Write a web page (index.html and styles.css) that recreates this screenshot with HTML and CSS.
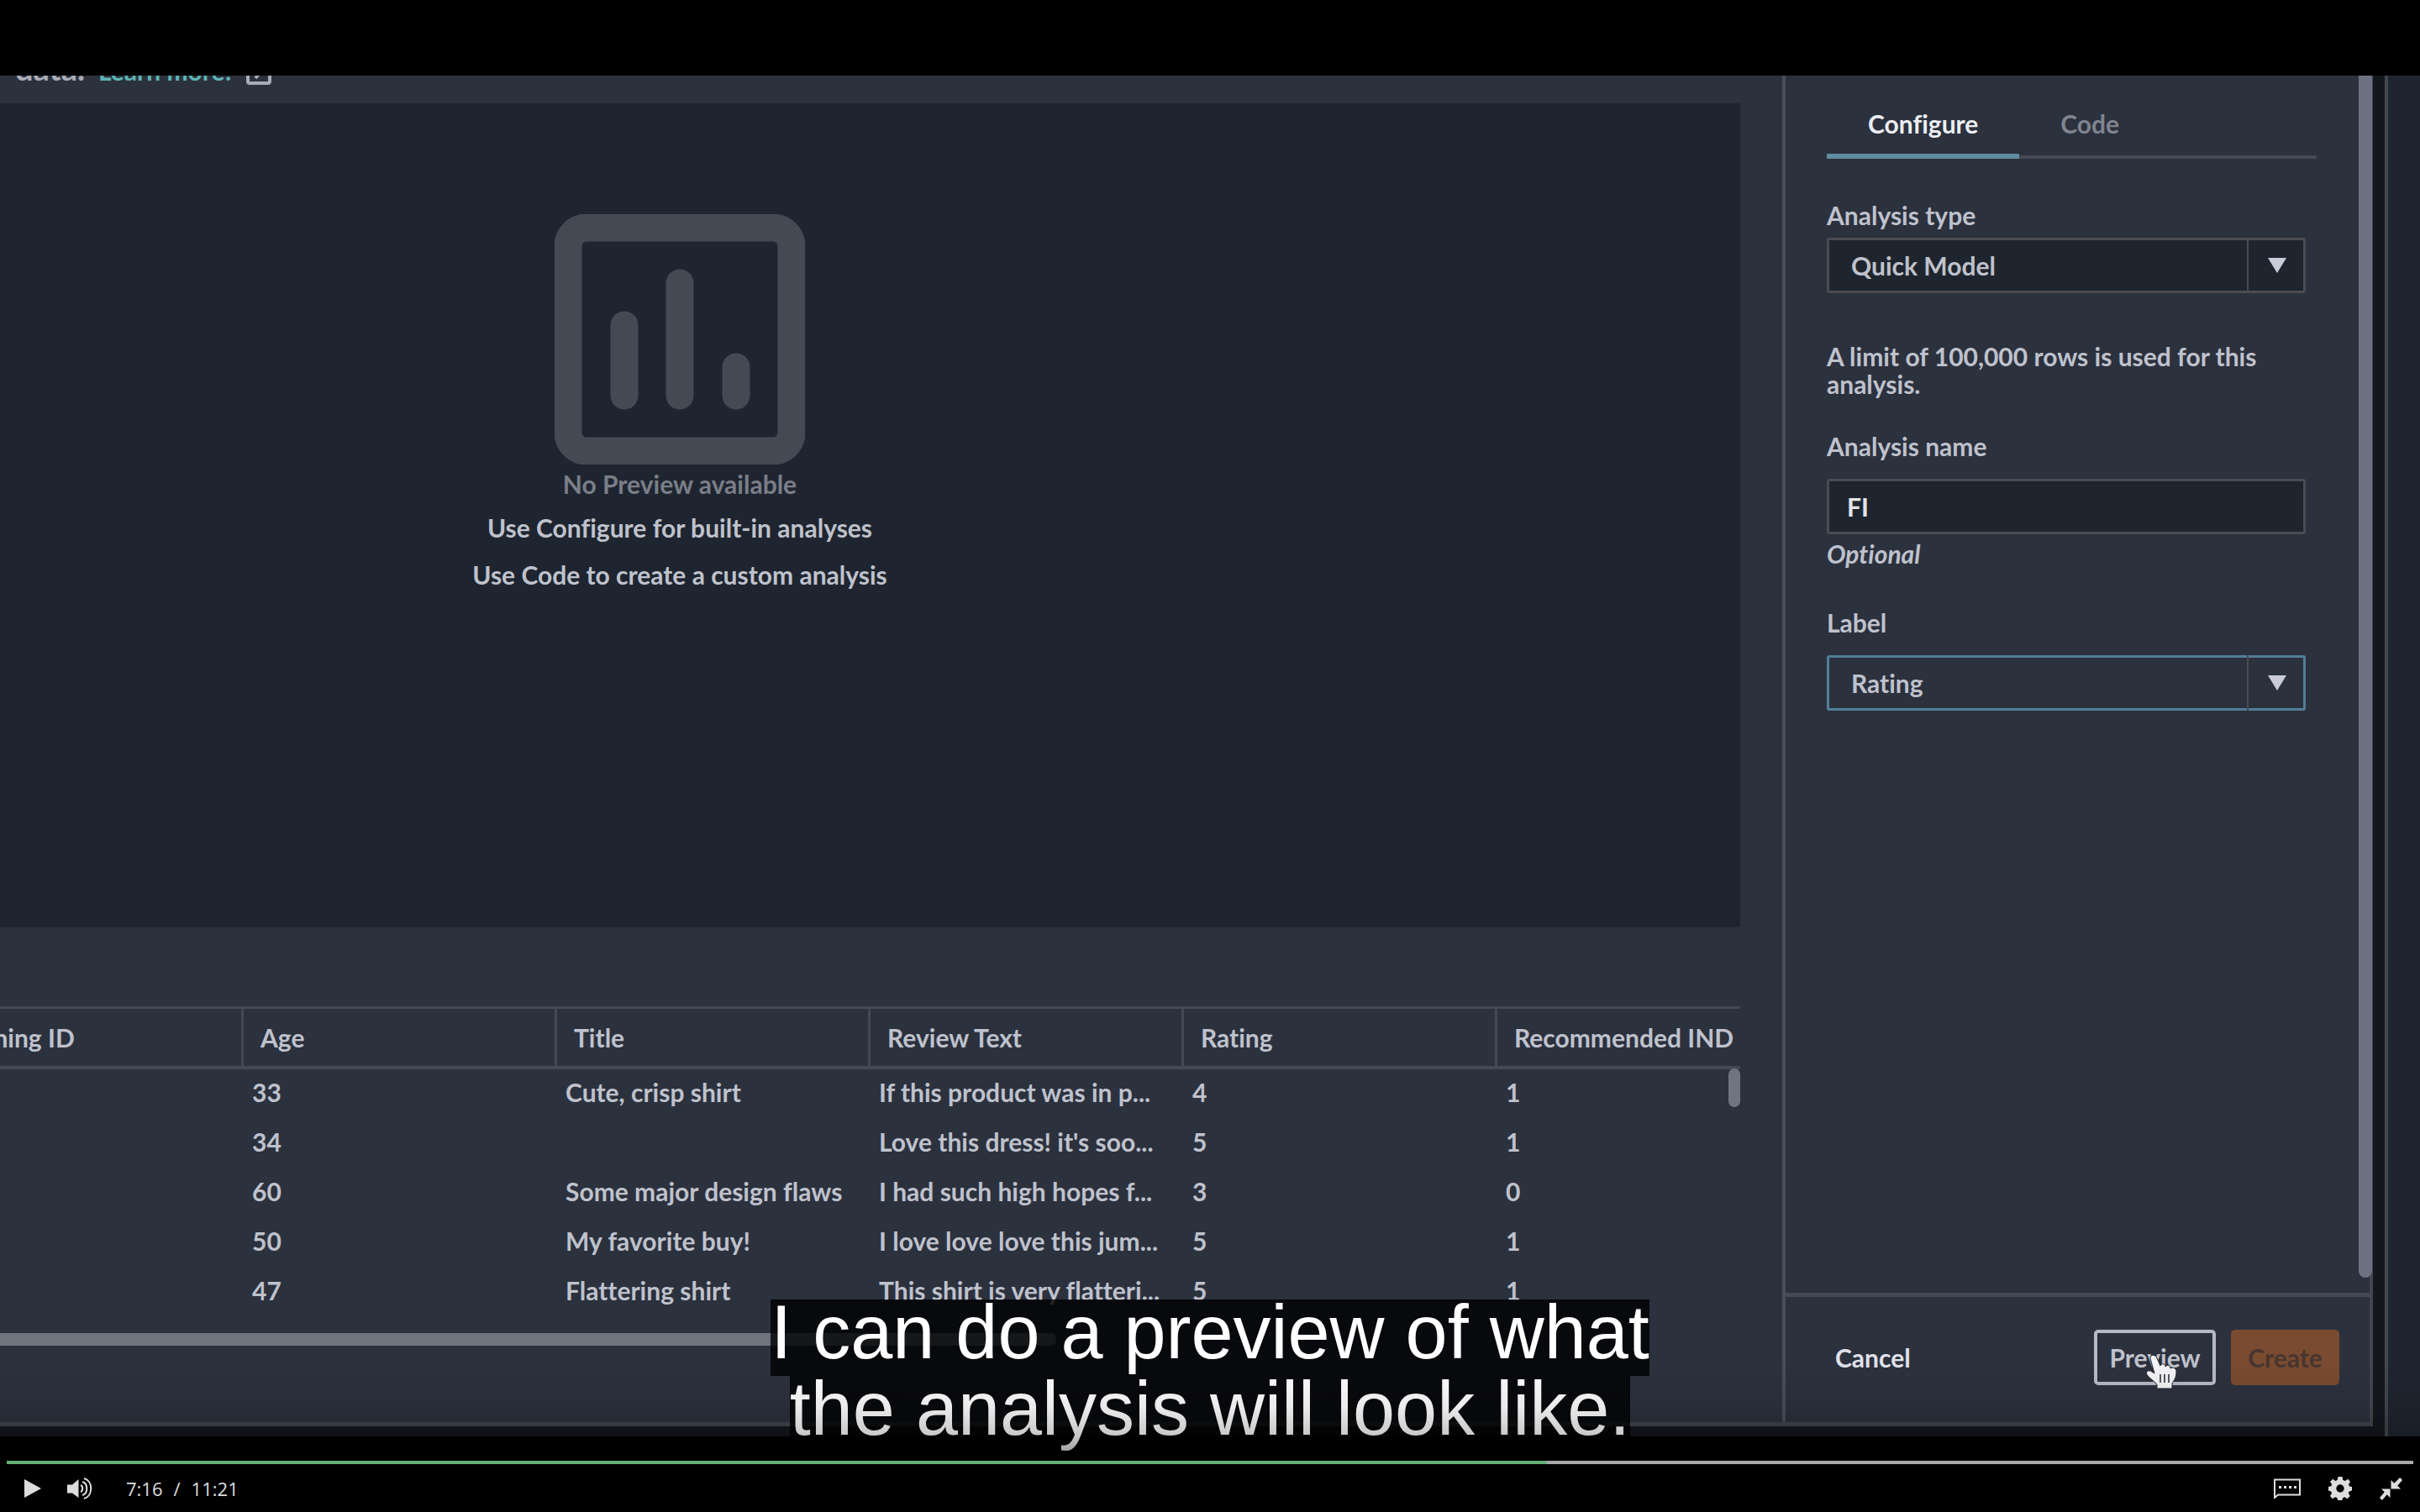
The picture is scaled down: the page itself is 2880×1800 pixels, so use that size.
FILE: index.html
```
<!DOCTYPE html>
<html lang="en">
<head>
<meta charset="utf-8">
<title>Video player</title>
<link rel="stylesheet" href="styles.css">
</head>
<body>
<div class="player">
  <div class="frame">
    <div class="dialog">
      <main class="main">
        <p class="intro">data. <a href="#">Learn more!</a>
          <svg class="external" viewBox="0 0 32 32" fill="none" stroke="currentColor" stroke-width="4"><path d="M12 3H5a2 2 0 0 0-2 2v22a2 2 0 0 0 2 2h22a2 2 0 0 0 2-2V16M18 3h11v10M29 3 12 23"/></svg>
        </p>
        <section class="canvas">
          <svg class="chart-icon" viewBox="0 0 298 298"><rect x="16" y="16" width="266" height="266" rx="22" fill="none" stroke="#444953" stroke-width="33"/><g stroke="#444953" stroke-width="33" stroke-linecap="round"><path d="M83 132v84M149 82v134M216 182v34"/></g></svg>
          <p class="muted">No Preview available</p>
          <p class="hint">Use Configure for built-in analyses</p>
          <p class="hint">Use Code to create a custom analysis</p>
        </section>
        <section class="data">
          <div class="rows">
            <table>
              <thead>
                <tr><th>Clothing ID</th><th>Age</th><th>Title</th><th>Review Text</th><th>Rating</th><th>Recommended IND</th></tr>
              </thead>
              <tbody>
                <tr><td></td><td>33</td><td>Cute, crisp shirt</td><td>If this product was in p...</td><td>4</td><td>1</td></tr>
                <tr><td></td><td>34</td><td></td><td>Love this dress! it's soo...</td><td>5</td><td>1</td></tr>
                <tr><td></td><td>60</td><td>Some major design flaws</td><td>I had such high hopes f...</td><td>3</td><td>0</td></tr>
                <tr><td></td><td>50</td><td>My favorite buy!</td><td>I love love love this jum...</td><td>5</td><td>1</td></tr>
                <tr><td></td><td>47</td><td>Flattering shirt</td><td>This shirt is very flatteri...</td><td>5</td><td>1</td></tr>
              </tbody>
            </table>
            <span class="thumb-y"></span>
          </div>
          <div class="thumb-x"></div>
        </section>
      </main>
      <aside class="side">
        <div class="side-body">
          <div class="form">
            <nav class="tabs">
              <button class="tab active" type="button">Configure</button>
              <button class="tab" type="button">Code</button>
            </nav>
            <div class="field">
              <label class="tight" for="type">Analysis type</label>
              <div class="select">
                <select id="type"><option>Quick Model</option></select>
                <span class="arrow"><svg viewBox="0 0 22 18"><path d="M0 0h22L11 18z"/></svg></span>
              </div>
            </div>
            <p class="note">A limit of 100,000 rows is used for this analysis.</p>
            <div class="field">
              <label for="name">Analysis name</label>
              <input class="text" id="name" type="text" value="FI">
              <em>Optional</em>
            </div>
            <div class="field last">
              <label for="label">Label</label>
              <div class="select focus">
                <select id="label"><option>Rating</option></select>
                <span class="arrow"><svg viewBox="0 0 22 18"><path d="M0 0h22L11 18z"/></svg></span>
              </div>
            </div>
          </div>
          <div class="side-scroll"></div>
        </div>
        <footer class="actions">
          <button class="btn link" type="button">Cancel</button>
          <button class="btn outline" type="button">Preview
            <svg class="cursor" viewBox="0 0 40 44"><path d="M7 4c0-5 6-5 8 0l4 9c1-3 6-3 6 1 2-3 6-2 6 2 3-2 7 0 7 4 0 8-3 10-5 14v6H15v-5L4 25c-4-5 1-8 5-5l3 2z" fill="#f4f4f6" stroke="#23262d" stroke-width="1"/><path d="M19 23v10M24 23v10M29 23v10" stroke="#555963" stroke-width="2"/></svg>
          </button>
          <button class="btn primary" type="button" disabled>Create</button>
        </footer>
      </aside>
    </div>
    <div class="page-edge"></div>
  </div>
  <div class="captions"><span>I can do a preview of what</span><span>the analysis will look like.</span></div>
  <div class="shade"></div>
  <div class="controls">
    <input class="seek" type="range" min="0" max="681" value="436" aria-label="Seek">
    <div class="bar">
      <button class="ctl play" type="button" aria-label="Play"><svg viewBox="0 0 20 22"><path d="M0 0l20 11L0 22z"/></svg></button>
      <button class="ctl volume" type="button" aria-label="Volume"><svg viewBox="0 0 30 26"><path d="M0 8.500h6L13.500 2v22L6 18.500H0z"/><g fill="none" stroke="#ddd" stroke-width="2"><path d="M16 9c3 1 3 7 0 8M18 5c7 2 7 14 0 16M20 1c11 3 11 21 0 24"/></g></svg></button>
      <div class="time"><span>7:16</span><span>/</span><span>11:21</span></div>
      <button class="ctl cc" type="button" aria-label="Captions"><svg viewBox="0 0 32 24"><path d="M1 1.500h30v18H5l-4 3.500z" fill="none" stroke="#ddd" stroke-width="2"/><path d="M6 9h3v3H6zM12 9h3v3h-3zM18 9h3v3h-3zM24 9h3v3h-3z"/></svg></button>
      <button class="ctl gear" type="button" aria-label="Settings"><svg viewBox="0 0 28 28"><path fill-rule="evenodd" d="M11.500 0h5l.8 4 2.500 1L23.200 2.800l2.800 3.200-2 3.200 1 2.300 3 .5v4.500l-3.200.9-1 2.300 2 3.300-3.300 3.300-3.200-2-2.300 1-.7 3.500h-5l-.8-3.500-2.300-1-3.300 2L2 23l2-3.300-1-2.300L0 16.500V12l3.200-.7 1-2.300L2 6l3.200-3.200L8.300 5l2.300-1zM14 9.300a4.700 4.700 0 1 0 0 9.400 4.700 4.700 0 0 0 0-9.400z"/></svg></button>
      <button class="ctl shrink" type="button" aria-label="Exit full screen"><svg viewBox="0 0 28 28"><path d="M14 3v11h12l-4-4 6-7-3-3-7 7zM13 25V14H2l4 4-6 7 3 3 6-7z"/></svg></button>
    </div>
  </div>
</div>
</body>
</html>
```
FILE: styles.css
```
* { box-sizing: border-box; }

body {
  margin: 0;
  background: #000;
  color: #bfc2cc;
  font: 700 30px/34px Lato, "Open Sans", sans-serif;
  font-variant-ligatures: none;
}

p { margin: 0; }

button, input, select { font: inherit; color: inherit; margin: 0; }

button { padding: 0; border: 0; background: none; cursor: pointer; }

.player {
  position: relative;
  display: flex;
  flex-direction: column;
  height: 100vh;
  padding-top: 90px;
  overflow: hidden;
}

.frame {
  display: flex;
  flex: 1;
  min-height: 0;
  overflow: hidden;
  background: #14171c;
}

.dialog {
  display: flex;
  flex: 1;
  min-width: 0;
  margin-bottom: 12px;
  border-right: 4px solid #43464f;
  border-bottom: 5px solid #43464f;
  background: #2c313e;
}

.page-edge {
  width: 42px;
  margin-left: 14px;
  border-left: 4px solid #43464d;
  background: #1f2530;
}

/* Preview area and data table */
.main {
  display: flex;
  flex: 1;
  flex-direction: column;
  min-width: 0;
  padding-right: 50px;
  overflow: hidden;
}

.intro {
  display: flex;
  flex: none;
  align-items: baseline;
  gap: 16px;
  height: 59px;
  margin-top: -26px;
  padding: 0 18px 25px;
  color: #a9acb7;
  font-size: 38px;
}

.intro a { color: #5cb5b3; font-size: 30px; text-decoration: none; }

.external {
  flex: none;
  align-self: flex-end;
  width: 32px;
  height: 32px;
  margin-bottom: -4px;
}

.canvas {
  display: flex;
  flex: 1;
  flex-direction: column;
  align-items: center;
  margin-left: -453px;
  padding-top: 132px;
  background: #1f2530;
}

.chart-icon { width: 298px; height: 298px; margin-bottom: 6px; }

.muted { margin-bottom: 18px; color: #7a7e88; }

.hint { margin-bottom: 22px; }

.data { padding: 94px 0 91px; }

.rows { position: relative; height: 389px; overflow: hidden; }

table {
  width: 2238px;
  margin-left: -86px;
  border-spacing: 0;
  table-layout: fixed;
}

th, td { text-align: left; white-space: nowrap; }

th {
  height: 75px;
  padding: 0 0 0 20px;
  border: solid #454953;
  border-width: 3px 0 4px 3px;
}

td { height: 59px; padding: 0 0 6px 13px; }

.thumb-y {
  position: absolute;
  top: 74px;
  right: 0;
  width: 14px;
  height: 46px;
  border-radius: 7px;
  background: #70747f;
}

.thumb-x {
  width: 1257px;
  height: 15px;
  border-radius: 0 7px 7px 0;
  background: #70747f;
}

/* Configuration side panel */
.side {
  display: flex;
  flex-direction: column;
  width: 699px;
  border-left: 4px solid #4a4e58;
}

.side-body { display: flex; flex: 1; }

.form { flex: 1; min-width: 0; padding: 40px 63px 0 49px; }

.tabs {
  display: flex;
  margin: 0 -13px 50px 0;
  box-shadow: inset 0 -4px #454954;
}

.tab {
  padding: 0 49px 19px;
  border-bottom: 6px solid transparent;
  color: #80848e;
}

.tab.active { border-color: #5f8c9f; color: #eceef3; }

.field { display: flex; flex-direction: column; }

.field.last { margin-top: 48px; }

label { margin-bottom: 22px; }

.tight { margin-bottom: 10px; }

.note { margin: 59px 0 40px; line-height: 33px; }

em { margin-top: 6px; }

.select { display: grid; }

.select > * { grid-area: 1 / 1; }

select, .text {
  width: 100%;
  height: 66px;
  border: 3px solid #4b4c52;
  border-radius: 3px;
  outline: 0;
  background: #1f252e;
  appearance: none;
}

select { padding: 0 26px; }

.text { padding: 0 21px; color: #e3e5ea; }

.arrow {
  display: grid;
  place-items: center;
  justify-self: end;
  width: 70px;
  border-left: 2px solid #4b4c52;
  pointer-events: none;
}

.arrow svg { width: 22px; height: 18px; fill: #c9ccd8; }

.focus select { border-color: #527f96; background: #2c313e; }

.side-scroll {
  flex: none;
  width: 16px;
  margin: 0 -3px 18px 0;
  border-radius: 0 0 8px 8px;
  background: #6d7182;
}

.actions {
  display: flex;
  gap: 18px;
  height: 154px;
  padding: 39px 36px 0 59px;
  border-top: 5px solid #454953;
}

.btn { position: relative; height: 66px; border-radius: 5px; }

.link { margin-right: auto; color: #e0e2ea; }

.outline { width: 145px; border: 4px solid #b7bac6; }

.primary { width: 129px; background: #7a4b30; color: #48352f; }

.cursor {
  position: absolute;
  top: 26px;
  left: 56px;
  width: 40px;
  height: 44px;
}

/* Captions and the shade behind the controls */
.captions {
  position: absolute;
  right: 0;
  bottom: 71px;
  left: 0;
  display: flex;
  flex-direction: column;
  align-items: center;
  color: #fff;
  font: 90px/79px "Liberation Sans", Arial, sans-serif;
}

.captions span { padding-bottom: 12px; background: rgba(0, 0, 0, .8); }

.shade {
  position: absolute;
  right: 0;
  bottom: 0;
  left: 0;
  height: 180px;
  background: linear-gradient(rgba(0, 0, 0, 0), rgba(0, 0, 0, .08) 30%, rgba(0, 0, 0, .22) 50%, rgba(0, 0, 0, .4) 62%, rgba(0, 0, 0, .8));
}

/* Player controls */
.controls { position: relative; height: 90px; padding: 29px 8px 0; }

.seek {
  display: block;
  width: 100%;
  height: 4px;
  appearance: none;
  background: linear-gradient(to right, #64b078 64%, #a9a9a9 64%);
}

.seek::-webkit-slider-thumb { appearance: none; width: 0; height: 0; }

.bar { display: flex; align-items: center; height: 58px; padding: 0 13px 0 21px; }

.ctl svg { display: block; width: 100%; fill: #ddd; }

.play { width: 20px; }

.volume { width: 30px; margin-left: 31px; }

.time {
  display: flex;
  gap: 13px;
  margin: 0 auto 0 40px;
  color: #ddd;
  font: 22px/30px "Open Sans", sans-serif;
}

.cc { width: 32px; }

.gear { width: 28px; margin: 0 33px; }

.shrink { width: 27px; }
```
